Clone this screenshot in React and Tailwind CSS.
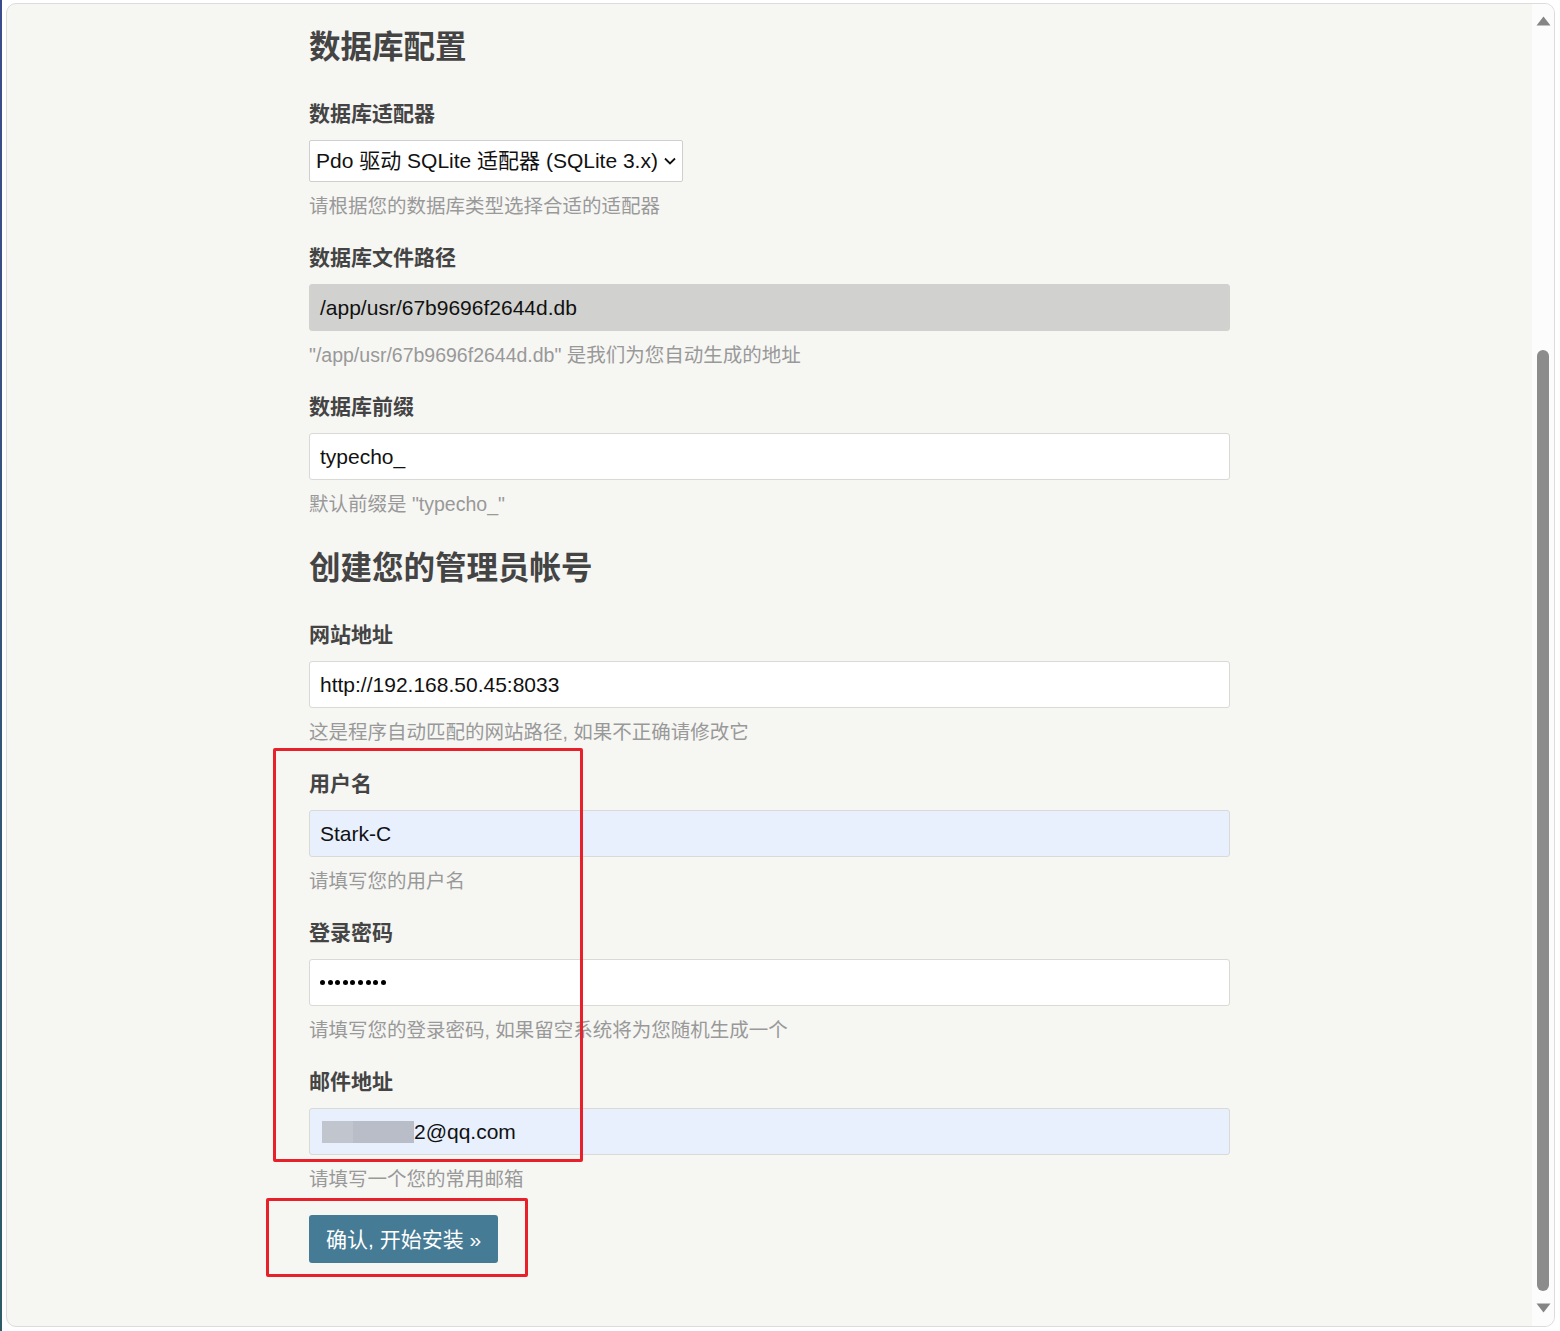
import React from "react";

const font = {
  fontFamily: '"Liberation Sans", Arial, "Noto Sans CJK SC", sans-serif',
};

function Field({ label, children, desc, first }) {
  return (
    <div className={first ? "mt-[32px]" : "mt-[22px]"}>
      <div className="text-[21px] leading-[30px] font-bold text-[#444]">{label}</div>
      <div className="mt-[11px]">{children}</div>
      <div className="mt-[9px] text-[19.5px] leading-[30px] text-[#999]">{desc}</div>
    </div>
  );
}

function Box({ value, tone = "white", children }) {
  const bg =
    tone === "disabled"
      ? "bg-[#d1d1cf] border-[#d1d1cf]"
      : tone === "autofill"
      ? "bg-[#e8f0fe] border-[#d9d9d6]"
      : "bg-white border-[#d9d9d6]";
  return (
    <div
      className={`h-[47px] w-full rounded-[3px] border ${bg} flex items-center px-[10px] text-[21px] text-[#111]`}
    >
      {children || value}
    </div>
  );
}

export default function App() {
  return (
    <div style={font} className="h-[1331px] w-[1560px] bg-white relative overflow-hidden">
      <div className="absolute left-0 top-0 h-full w-[2px] bg-gradient-to-b from-[#3b4b8c] to-[#2d5c66]" />
      <div className="h-full pt-[3px] pl-[6px] pr-[5px] pb-[4px]">
        <div className="h-full rounded-[10px] border border-[#dcdcdc] bg-[#f6f6f3] flex overflow-hidden">
          <div className="flex-1">
            <div className="relative mx-auto w-[921px] pt-[23px]">
              <h2 className="text-[31.5px] leading-[40px] font-bold text-[#444]">数据库配置</h2>

              <Field first label="数据库适配器" desc="请根据您的数据库类型选择合适的适配器">
                <div className="h-[42px] w-[374px] bg-white border border-[#cfcfcf] rounded-[2px] flex items-center pl-[6px] pr-[5px] text-[21px] text-[#111]">
                  <span className="flex-1 whitespace-nowrap">Pdo 驱动 SQLite 适配器 (SQLite 3.x)</span>
                  <svg width="14" height="10" viewBox="0 0 14 10" className="ml-[2px] shrink-0">
                    <path d="M2 2.5 L7 7.5 L12 2.5" fill="none" stroke="#111" strokeWidth="1.8" />
                  </svg>
                </div>
              </Field>

              <Field label="数据库文件路径" desc={'"/app/usr/67b9696f2644d.db" 是我们为您自动生成的地址'}>
                <Box tone="disabled" value="/app/usr/67b9696f2644d.db" />
              </Field>

              <Field label="数据库前缀" desc={'默认前缀是 "typecho_"'}>
                <Box value="typecho_" />
              </Field>

              <h2 className="mt-[29px] text-[31.5px] leading-[40px] font-bold text-[#444]">创建您的管理员帐号</h2>

              <Field first label="网站地址" desc="这是程序自动匹配的网站路径, 如果不正确请修改它">
                <Box value="http://192.168.50.45:8033" />
              </Field>

              <Field label="用户名" desc="请填写您的用户名">
                <Box tone="autofill" value="Stark-C" />
              </Field>

              <Field label="登录密码" desc="请填写您的登录密码, 如果留空系统将为您随机生成一个">
                <Box>
                  <span className="flex gap-[2.6px]">
                    {Array.from({ length: 9 }).map((_, i) => (
                      <span key={i} className="block h-[5px] w-[5px] rounded-full bg-black" />
                    ))}
                  </span>
                </Box>
              </Field>

              <Field label="邮件地址" desc="请填写一个您的常用邮箱">
                <Box tone="autofill">
                  <span className="flex items-center">
                    <span className="ml-[2px] block h-[22px] w-[31px] bg-[#c1c5ce]" />
                    <span className="block h-[22px] w-[61px] bg-[#b8bdc8]" />
                    <span>2@qq.com</span>
                  </span>
                </Box>
              </Field>

              <button className="mt-[21px] h-[48px] px-[17px] rounded-[3px] bg-[#467b96] text-white text-[21px] leading-none">
                确认, 开始安装 »
              </button>

              {/* annotation boxes */}
              <div className="absolute left-[-36px] top-[744px] w-[310px] h-[414px] border-[3px] border-[#e8202a] rounded-[2px] pointer-events-none" />
              <div className="absolute left-[-43px] top-[1194px] w-[262px] h-[79px] border-[3px] border-[#e8202a] rounded-[2px] pointer-events-none" />
            </div>
          </div>

          {/* scrollbar */}
          <div className="w-[22px] bg-[#fcfcfc] flex flex-col items-center">
            <svg width="15" height="10" viewBox="0 0 15 10" className="mt-[12px]">
              <path d="M7.5 0.5 L14.5 9.5 L0.5 9.5 Z" fill="#858585" />
            </svg>
            <div className="mt-[324px] w-[12px] h-[941px] rounded-full bg-[#8c8c8c]" />
            <svg width="15" height="10" viewBox="0 0 15 10" className="mt-[12px]">
              <path d="M0.5 0.5 L14.5 0.5 L7.5 9.5 Z" fill="#858585" />
            </svg>
          </div>
        </div>
      </div>
    </div>
  );
}
